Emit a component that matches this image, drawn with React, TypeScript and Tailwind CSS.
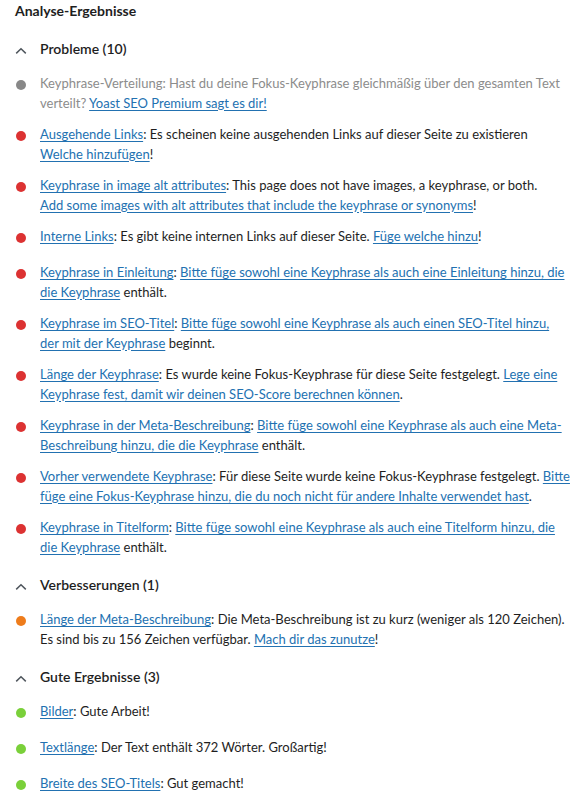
import type { ReactNode } from "react";

type Score = "na" | "bad" | "ok" | "good";

type Part = string | { link: string };

type Result = { score: Score; parts: Part[]; muted?: boolean };

const BULLET: Record<Score, string> = {
  na: "bg-[#888888]",
  bad: "bg-[#dc3232]",
  ok: "bg-[#ee7c1b]",
  good: "bg-[#7ad03a]",
};

const problems: Result[] = [
  {
    score: "na",
    muted: true,
    parts: [
      "Keyphrase-Verteilung: Hast du deine Fokus-Keyphrase gleichmäßig über den gesamten Text verteilt? ",
      { link: "Yoast SEO Premium sagt es dir!" },
    ],
  },
  {
    score: "bad",
    parts: [
      { link: "Ausgehende Links" },
      ": Es scheinen keine ausgehenden Links auf dieser Seite zu existieren ",
      { link: "Welche hinzufügen" },
      "!",
    ],
  },
  {
    score: "bad",
    parts: [
      { link: "Keyphrase in image alt attributes" },
      ": This page does not have images, a keyphrase, or both.\n",
      { link: "Add some images with alt attributes that include the keyphrase or synonyms" },
      "!",
    ],
  },
  {
    score: "bad",
    parts: [
      { link: "Interne Links" },
      ": Es gibt keine internen Links auf dieser Seite. ",
      { link: "Füge welche hinzu" },
      "!",
    ],
  },
  {
    score: "bad",
    parts: [
      { link: "Keyphrase in Einleitung" },
      ": ",
      { link: "Bitte füge sowohl eine Keyphrase als auch eine Einleitung hinzu, die die Keyphrase" },
      " enthält.",
    ],
  },
  {
    score: "bad",
    parts: [
      { link: "Keyphrase im SEO-Titel" },
      ": ",
      { link: "Bitte füge sowohl eine Keyphrase als auch einen SEO-Titel hinzu, der mit der Keyphrase" },
      " beginnt.",
    ],
  },
  {
    score: "bad",
    parts: [
      { link: "Länge der Keyphrase" },
      ": Es wurde keine Fokus-Keyphrase für diese Seite festgelegt. ",
      { link: "Lege eine Keyphrase fest, damit wir deinen SEO-Score berechnen können" },
      ".",
    ],
  },
  {
    score: "bad",
    parts: [
      { link: "Keyphrase in der Meta-Beschreibung" },
      ": ",
      { link: "Bitte füge sowohl eine Keyphrase als auch eine Meta-Beschreibung hinzu, die die Keyphrase" },
      " enthält.",
    ],
  },
  {
    score: "bad",
    parts: [
      { link: "Vorher verwendete Keyphrase" },
      ": Für diese Seite wurde keine Fokus-Keyphrase festgelegt. ",
      { link: "Bitte füge eine Fokus-Keyphrase hinzu, die du noch nicht für andere Inhalte verwendet hast" },
      ".",
    ],
  },
  {
    score: "bad",
    parts: [
      { link: "Keyphrase in Titelform" },
      ": ",
      { link: "Bitte füge sowohl eine Keyphrase als auch eine Titelform hinzu, die die Keyphrase" },
      " enthält.",
    ],
  },
];

const improvements: Result[] = [
  {
    score: "ok",
    parts: [
      { link: "Länge der Meta-Beschreibung" },
      ": Die Meta-Beschreibung ist zu kurz (weniger als 120 Zeichen). Es sind bis zu 156 Zeichen verfügbar. ",
      { link: "Mach dir das zunutze" },
      "!",
    ],
  },
];

const good: Result[] = [
  { score: "good", parts: [{ link: "Bilder" }, ": Gute Arbeit!"] },
  { score: "good", parts: [{ link: "Textlänge" }, ": Der Text enthält 372 Wörter. Großartig!"] },
  { score: "good", parts: [{ link: "Breite des SEO-Titels" }, ": Gut gemacht!"] },
];

function renderParts(parts: Part[]): ReactNode[] {
  return parts.map((p, i) => {
    if (typeof p !== "string") {
      return (
        <a key={i} href="#" className="text-[#2271b1] underline underline-offset-[2px]">
          {p.link}
        </a>
      );
    }
    // a "\n" in the copy is a hard break
    const bits = p.split("\n");
    return (
      <span key={i}>
        {bits.map((b, j) => (
          <span key={j}>
            {j > 0 && <br />}
            {b}
          </span>
        ))}
      </span>
    );
  });
}

function Section({ title, items }: { title: string; items: Result[] }) {
  return (
    <div className="mt-[18px]">
      <button type="button" className="flex h-5 items-start text-left">
        <svg width="12" height="8" viewBox="0 0 12 8" className="ml-[15px] mt-[8px] shrink-0" fill="none">
          <path d="M1.2 6.4 6 1.8l4.8 4.6" stroke="#50575e" strokeWidth="1.5" />
        </svg>
        <span className="ml-[13px] text-[14px] font-semibold leading-5 text-[#1e1e1e]">{title}</span>
      </button>
      <ul className="mt-[15px] flex flex-col gap-3">
        {items.map((r, i) => (
          <li key={i} className="flex min-h-[24px] items-start">
            <span className={`ml-4 mt-[6px] h-[10px] w-[10px] shrink-0 rounded-full ${BULLET[r.score]}`} />
            <p
              className={`ml-[14px] text-[13px] leading-[19.5px] ${
                r.muted ? "text-[#8c8c8c] [&_a]:text-[#2271b1]" : "text-[#1e1e1e]"
              }`}
            >
              {renderParts(r.parts)}
            </p>
          </li>
        ))}
      </ul>
    </div>
  );
}

export default function App() {
  return (
    <div className="min-h-screen w-[576px] bg-white pr-[5px] pt-[1px] font-['Lato','Segoe_UI',sans-serif]">
      <h2 className="pl-[15px] text-[14px] font-bold leading-5 text-[#1e1e1e]">Analyse-Ergebnisse</h2>
      <Section title="Probleme (10)" items={problems} />
      <Section title="Verbesserungen (1)" items={improvements} />
      <Section title="Gute Ergebnisse (3)" items={good} />
    </div>
  );
}
